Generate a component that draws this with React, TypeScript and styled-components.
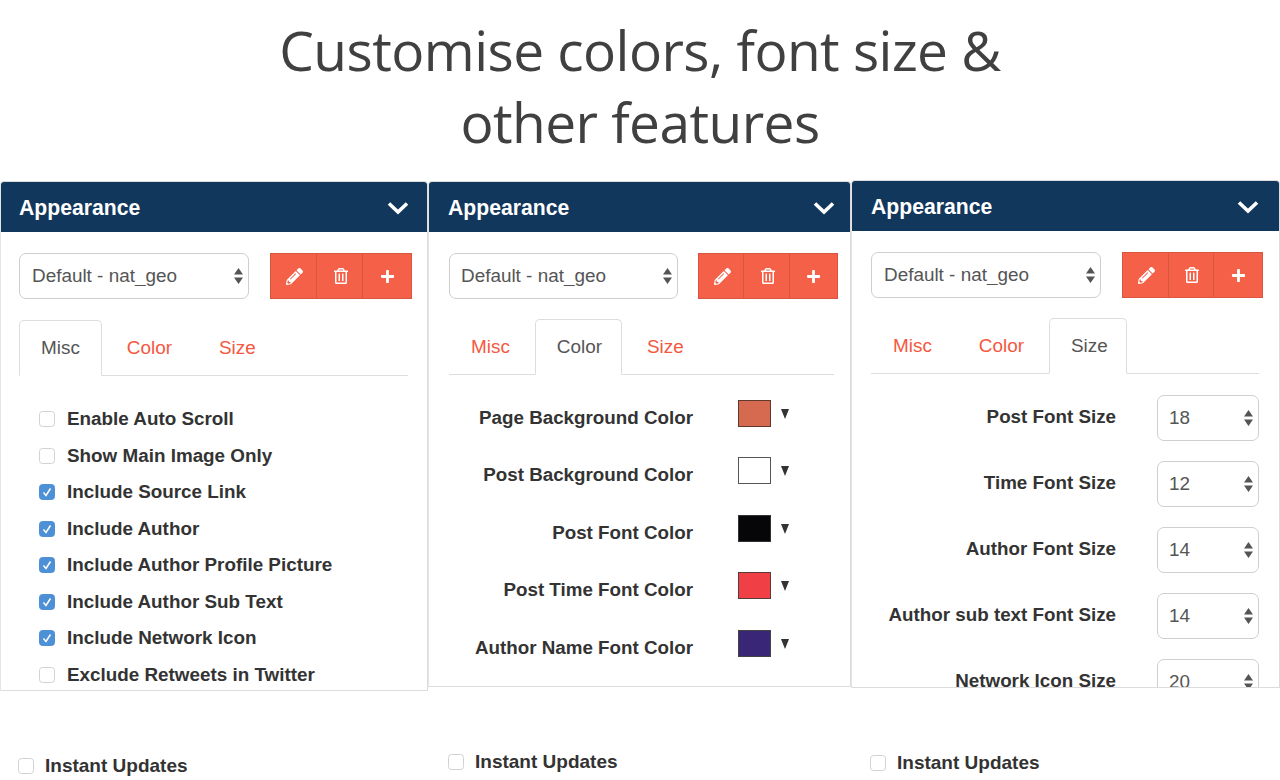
import React from "react";
import styled, { createGlobalStyle } from "styled-components";
import { FaPencilAlt, FaRegTrashAlt, FaPlus } from "react-icons/fa";

const GlobalStyle = createGlobalStyle`
  html, body { margin: 0; padding: 0; background: #fff; overflow: hidden; }
  body { font-family: "Liberation Sans", Arial, sans-serif; color: #333; }
  * { box-sizing: border-box; }
`;

const Page = styled.div`
  width: 1280px;
  height: 780px;
  overflow: hidden;
  background: #fff;
`;

const Title = styled.h1`
  margin: 0;
  height: 180px;
  padding-top: 14px;
  font-family: "Open Sans", "Noto Sans", sans-serif;
  font-weight: 400;
  font-size: 55px;
  line-height: 72px;
  letter-spacing: -0.55px;
  color: #404040;
  text-align: center;
`;

const Columns = styled.div`
  display: flex;
  align-items: flex-start;
`;

const Column = styled.section<{ $width: number; $top: number }>`
  width: ${(p) => p.$width}px;
  margin-top: ${(p) => p.$top}px;
  flex: none;
`;

const Panel = styled.div<{ $height: number }>`
  height: ${(p) => p.$height}px;
  overflow: hidden;
  background: #fff;
  border: 1px solid #dcdcdc;
  border-left-color: #e4e4e4;
  border-radius: 4px 4px 0 0;
`;

const PanelHeader = styled.header<{ $left: number; $right: number }>`
  height: 50px;
  margin: 0 -1px;
  padding: 0 ${(p) => p.$right}px 0 ${(p) => p.$left}px;
  display: flex;
  align-items: center;
  justify-content: space-between;
  background: #12375c;
  color: #fff;
  font-size: 21.2px;
  font-weight: 700;
`;

const HeaderTitle = styled.span`
  margin-top: 2px;
`;

const Chevron = styled.svg`
  width: 22px;
  height: 14px;
  margin-top: 1px;
  display: block;
  fill: none;
  stroke: #fff;
  stroke-width: 3.6;
`;

const Body = styled.div<{ $left: number; $right: number }>`
  padding: 21px ${(p) => p.$right}px 0 ${(p) => p.$left}px;
`;

const Toolbar = styled.div`
  display: flex;
  justify-content: space-between;
  align-items: flex-start;
`;

const SelectWrap = styled.div<{ $width: number }>`
  position: relative;
  width: ${(p) => p.$width}px;
  flex: none;
`;

const NativeSelect = styled.select<{ $pad: number }>`
  display: block;
  width: 100%;
  height: 46px;
  padding: 0 24px 2px ${(p) => p.$pad}px;
  appearance: none;
  background: #fff;
  border: 1.5px solid #cfcfcf;
  border-radius: 7px;
  font-family: "Liberation Sans", Arial, sans-serif;
  font-size: 18.9px;
  color: #555;
`;

const Stepper = styled.svg`
  position: absolute;
  right: 5px;
  top: 14px;
  width: 11px;
  height: 18px;
  fill: #555;
  pointer-events: none;
`;

const ButtonGroup = styled.div<{ $width: number }>`
  display: grid;
  grid-template-columns: 47fr 46fr 49fr;
  width: ${(p) => p.$width}px;
  height: 46px;
  flex: none;
`;

const ActionButton = styled.button`
  min-width: 0;
  padding: 0 0 0 2px;
  display: flex;
  align-items: center;
  justify-content: center;
  background: #f46048;
  border: 1px solid #d9553f;
  border-left-width: 0;
  color: #fff;
  &:first-child { border-left-width: 1px; }
  &:last-child { padding: 0; }
`;

const TabBar = styled.nav<{ $top: number }>`
  display: flex;
  height: 56px;
  margin: ${(p) => p.$top}px 4px 0 0;
  border-bottom: 1px solid #ddd;
`;

const Tab = styled.a<{ $active?: boolean; $activeRight: number }>`
  height: 56px;
  padding: 0 ${(p) => (p.$active ? p.$activeRight : 21)}px 0 21px;
  margin-right: 3px;
  display: flex;
  align-items: center;
  font-size: 18.9px;
  color: ${(p) => (p.$active ? "#555" : "#f5573f")};
  background: ${(p) => (p.$active ? "#fff" : "transparent")};
  border: 1px solid ${(p) => (p.$active ? "#ddd" : "transparent")};
  border-bottom-color: ${(p) => (p.$active ? "#fff" : "transparent")};
  border-radius: 5px 5px 0 0;
`;

const CheckList = styled.div`
  margin-top: 25px;
  padding-left: 20px;
`;

const CheckRow = styled.label`
  height: 36.5px;
  display: flex;
  align-items: center;
  gap: 12px;
  font-size: 18.85px;
  font-weight: 700;
  color: #333;
`;

const Box = styled.span<{ $checked?: boolean }>`
  width: 16px;
  height: 16px;
  flex: none;
  display: flex;
  align-items: center;
  justify-content: center;
  border-radius: 3.5px;
  background: ${(p) => (p.$checked ? "#4d90d6" : "#fff")};
  border: 1.5px solid ${(p) => (p.$checked ? "#4d90d6" : "#d2d2d2")};
`;

const Tick = styled.svg`
  width: 10px;
  height: 10px;
  fill: none;
  stroke: #fff;
  stroke-width: 1.5;
`;

const ColorList = styled.div`
  margin-top: 24.5px;
`;

const ColorRow = styled.div`
  height: 57.5px;
  display: flex;
  align-items: flex-start;
`;

const RowLabel = styled.span<{ $width: number; $top: number }>`
  width: ${(p) => p.$width}px;
  margin-top: ${(p) => p.$top}px;
  flex: none;
  text-align: right;
  font-size: 18.8px;
  line-height: 27px;
  font-weight: 700;
  color: #333;
  white-space: nowrap;
`;

const Swatch = styled.span<{ $color: string; $edge: string }>`
  width: 33px;
  height: 27px;
  margin-left: 45px;
  flex: none;
  background: ${(p) => p.$color};
  border: 1.5px solid ${(p) => p.$edge};
`;

const Caret = styled.span`
  width: 0;
  height: 0;
  margin: 9px 0 0 10px;
  border-left: 4.5px solid transparent;
  border-right: 4.5px solid transparent;
  border-top: 10px solid #333;
`;

const SizeList = styled.div`
  margin-top: 21px;
`;

const SizeRow = styled.div`
  height: 66px;
  display: flex;
  align-items: flex-start;
`;

const SizeSelect = styled(SelectWrap)`
  margin-left: 41px;
`;

const Footer = styled.label<{ $left: number }>`
  height: 27px;
  margin-top: 61.5px;
  padding-left: ${(p) => p.$left}px;
  display: flex;
  align-items: center;
  gap: 11px;
  font-size: 19px;
  font-weight: 700;
  color: #333;
`;

const Check = ({ checked, label }: { checked?: boolean; label: string }) => (
  <>
    <Box $checked={checked}>
      {checked && (
        <Tick viewBox="0 0 10 10">
          <path d="M1.5 5.5 L4 8.5 L8.5 1.5" />
        </Tick>
      )}
    </Box>
    {label}
  </>
);

const StepperIcon = () => (
  <Stepper viewBox="0 0 11 18">
    <path d="M5.5 1 L10 7.5 H1 Z M5.5 17 L10 10.5 H1 Z" />
  </Stepper>
);

const miscOptions: [string, boolean][] = [
  ["Enable Auto Scroll", false],
  ["Show Main Image Only", false],
  ["Include Source Link", true],
  ["Include Author", true],
  ["Include Author Profile Picture", true],
  ["Include Author Sub Text", true],
  ["Include Network Icon", true],
  ["Exclude Retweets in Twitter", false],
];

const colorOptions: [string, string, string][] = [
  ["Page Background Color", "#d66a50", "#5e3a2e"],
  ["Post Background Color", "#ffffff", "#555555"],
  ["Post Font Color", "#060608", "#333333"],
  ["Post Time Font Color", "#f04045", "#5a3a3a"],
  ["Author Name Font Color", "#3a2676", "#444444"],
];

const sizeOptions: [string, string][] = [
  ["Post Font Size", "18"],
  ["Time Font Size", "12"],
  ["Author Font Size", "14"],
  ["Author sub text Font Size", "14"],
  ["Network Icon Size", "20"],
];

type PanelConfig = {
  width: number;
  top: number;
  height: number;
  headLeft: number;
  headRight: number;
  left: number;
  right: number;
  selectWidth: number;
  selectPad: number;
  groupWidth: number;
  tabTop: number;
  activeRight: number;
  footerLeft: number;
  active: string;
  content: React.ReactNode;
};

const panels: PanelConfig[] = [
  {
    width: 428,
    top: 1,
    height: 510,
    headLeft: 19,
    headRight: 19,
    left: 18,
    right: 15,
    selectWidth: 230,
    selectPad: 12,
    groupWidth: 142,
    tabTop: 21,
    activeRight: 21,
    footerLeft: 18,
    active: "Misc",
    content: (
      <CheckList>
        {miscOptions.map(([label, checked]) => (
          <CheckRow key={label}>
            <Check checked={checked} label={label} />
          </CheckRow>
        ))}
      </CheckList>
    ),
  },
  {
    width: 423,
    top: 1,
    height: 506,
    headLeft: 20,
    headRight: 16,
    left: 20,
    right: 12,
    selectWidth: 229,
    selectPad: 11,
    groupWidth: 140,
    tabTop: 20,
    activeRight: 19,
    footerLeft: 20,
    active: "Color",
    content: (
      <ColorList>
        {colorOptions.map(([label, color, edge]) => (
          <ColorRow key={label}>
            <RowLabel $width={244} $top={4}>
              {label}
            </RowLabel>
            <Swatch $color={color} $edge={edge} />
            <Caret />
          </ColorRow>
        ))}
      </ColorList>
    ),
  },
  {
    width: 429,
    top: 0,
    height: 508,
    headLeft: 20,
    headRight: 21,
    left: 19,
    right: 16,
    selectWidth: 230,
    selectPad: 12,
    groupWidth: 141,
    tabTop: 20,
    activeRight: 18,
    footerLeft: 19,
    active: "Size",
    content: (
      <SizeList>
        {sizeOptions.map(([label, value]) => (
          <SizeRow key={label}>
            <RowLabel $width={245} $top={8}>
              {label}
            </RowLabel>
            <SizeSelect $width={102}>
              <NativeSelect $pad={11} defaultValue={value}>
                <option>{value}</option>
              </NativeSelect>
              <StepperIcon />
            </SizeSelect>
          </SizeRow>
        ))}
      </SizeList>
    ),
  },
];

export default function App() {
  return (
    <Page>
      <GlobalStyle />
      <Title>
        Customise colors, font size &amp;
        <br />
        other features
      </Title>
      <Columns>
        {panels.map((panel) => (
          <Column key={panel.active} $width={panel.width} $top={panel.top}>
            <Panel $height={panel.height}>
              <PanelHeader $left={panel.headLeft} $right={panel.headRight}>
                <HeaderTitle>Appearance</HeaderTitle>
                <Chevron viewBox="0 0 22 14">
                  <path d="M2 2.5 L11 11 L20 2.5" />
                </Chevron>
              </PanelHeader>
              <Body $left={panel.left} $right={panel.right}>
                <Toolbar>
                  <SelectWrap $width={panel.selectWidth}>
                    <NativeSelect
                      $pad={panel.selectPad}
                      defaultValue="Default - nat_geo"
                    >
                      <option>Default - nat_geo</option>
                    </NativeSelect>
                    <StepperIcon />
                  </SelectWrap>
                  <ButtonGroup $width={panel.groupWidth}>
                    <ActionButton aria-label="Edit">
                      <FaPencilAlt size={17} />
                    </ActionButton>
                    <ActionButton aria-label="Delete">
                      <FaRegTrashAlt size={16} />
                    </ActionButton>
                    <ActionButton aria-label="Add">
                      <FaPlus size={15} />
                    </ActionButton>
                  </ButtonGroup>
                </Toolbar>
                <TabBar $top={panel.tabTop}>
                  {["Misc", "Color", "Size"].map((tab) => (
                    <Tab
                      key={tab}
                      $active={tab === panel.active}
                      $activeRight={panel.activeRight}
                    >
                      {tab}
                    </Tab>
                  ))}
                </TabBar>
                {panel.content}
              </Body>
            </Panel>
            <Footer $left={panel.footerLeft}>
              <Check label="Instant Updates" />
            </Footer>
          </Column>
        ))}
      </Columns>
    </Page>
  );
}
